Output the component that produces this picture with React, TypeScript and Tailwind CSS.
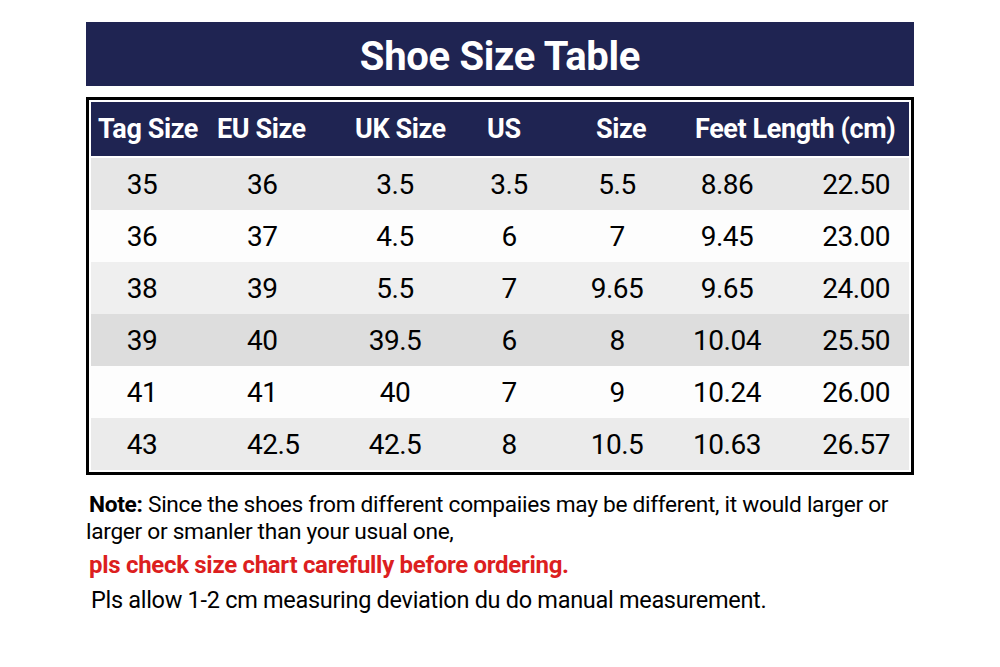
import React from 'react';

const rows = [
  { cells: ['35', '36', '3.5', '3.5', '5.5', '8.86', '22.50'], bg: 'bg-[#e6e6e6]' },
  { cells: ['36', '37', '4.5', '6', '7', '9.45', '23.00'], bg: 'bg-[#fdfdfd]' },
  { cells: ['38', '39', '5.5', '7', '9.65', '9.65', '24.00'], bg: 'bg-[#efefef]' },
  { cells: ['39', '40', '39.5', '6', '8', '10.04', '25.50'], bg: 'bg-[#dddddd]' },
  { cells: ['41', '41', '40', '7', '9', '10.24', '26.00'], bg: 'bg-[#fdfdfd]' },
  { cells: ['43', '42.5', '42.5', '8', '10.5', '10.63', '26.57'], bg: 'bg-[#ebebeb]' },
];

// fixed cell boxes so the numbers land under the headings like the chart
const cellClass = [
  'w-[102px] text-center',
  'w-[127px] pl-[54px] text-left',
  'w-[150px] text-center',
  'w-[78px] text-center',
  'w-[138px] text-center',
  'w-[82px] text-center',
  'flex-1 pr-[19px] text-right',
];

export default function App() {
  return (
    <div className="w-[1000px] h-[667px] bg-white font-['Roboto',sans-serif] text-black">
      <div className="pt-[22px] px-[86px]">
        <div className="h-[64px] bg-[#1f2452] flex items-center justify-center pt-[5px]">
          <h1 className="text-white text-[40px] font-bold tracking-[-0.3px] leading-none">Shoe Size Table</h1>
        </div>

        <div className="mt-[11px] border-[3px] border-black p-[2px]">
          <div className="h-[54px] bg-[#1f2452] flex items-center pl-[7px] text-white text-[27px] font-bold tracking-[-0.4px]">
            <span className="w-[119px]">Tag Size</span>
            <span className="w-[138px]">EU Size</span>
            <span className="w-[132px]">UK Size</span>
            <span className="w-[109px]">US</span>
            <span className="w-[99px]">Size</span>
            <span>Feet Length (cm)</span>
          </div>
          <div className="mt-[2px]">
            {rows.map((row, i) => (
              <div key={i} className={`h-[52px] flex items-center pt-[2px] text-[28px] font-normal tracking-[-0.5px] ${row.bg}`}>
                {row.cells.map((c, j) => (
                  <span key={j} className={cellClass[j]}>{c}</span>
                ))}
              </div>
            ))}
          </div>
        </div>
      </div>

      <div className="pl-[89px] pt-[16px] tracking-[-0.3px]">
        <p className="text-[22.7px] leading-[27px]">
          <span className="font-bold">Note:</span> Since the shoes from different compaiies may be different, it would larger or
        </p>
        <p className="-ml-[3px] text-[22.7px] leading-[27px]">larger or smanler than your usual one,</p>
        <p className="mt-[3px] text-[#dc1f1f] font-bold text-[24px] leading-[34px]">pls check size chart carefully before ordering.</p>
        <p className="mt-[3px] ml-[2px] text-[23.5px] leading-[30px]">Pls allow 1-2 cm measuring deviation du do manual measurement.</p>
      </div>
    </div>
  );
}
